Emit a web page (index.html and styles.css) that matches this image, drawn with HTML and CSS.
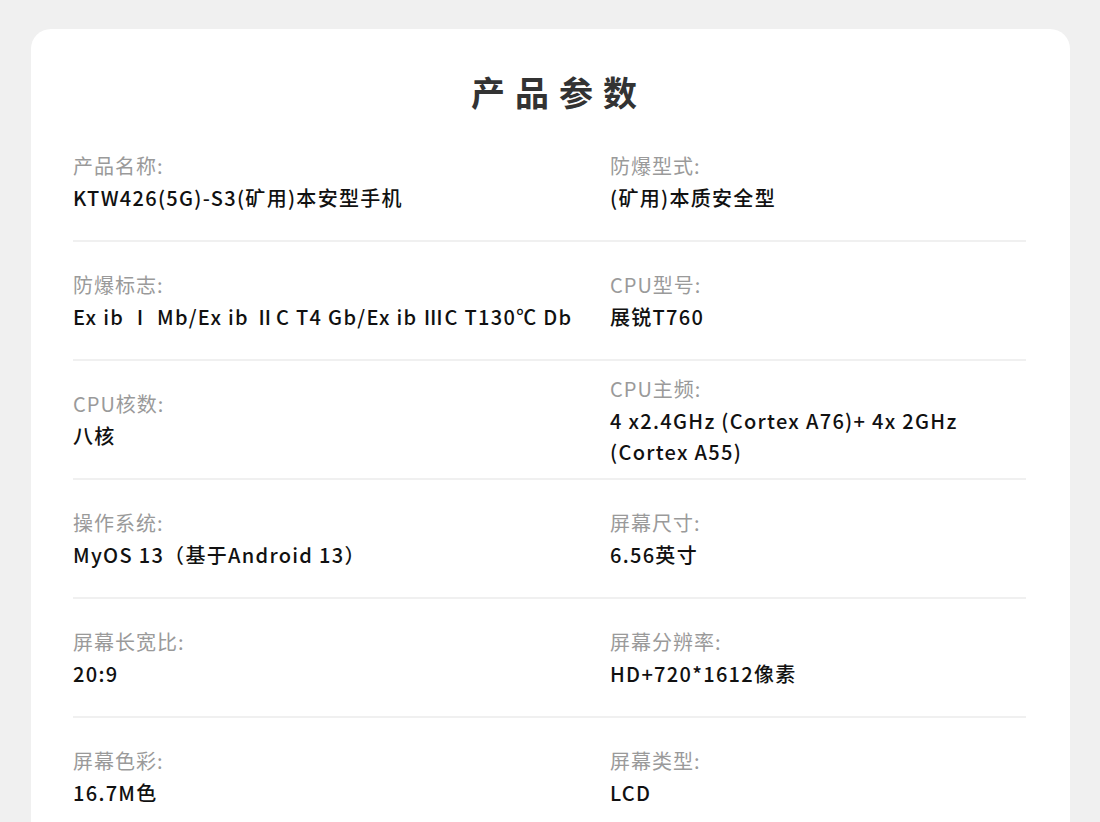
FILE: index.html
```html
<!DOCTYPE html>
<html lang="zh-CN">
<head>
<meta charset="utf-8">
<title>产品参数</title>
<link rel="stylesheet" href="styles.css">
</head>
<body>
<div class="page">
  <section class="card">
    <h1 class="title">产品参数</h1>
    <div class="specs">
      <div class="row">
        <div class="cell"><div class="label">产品名称:</div><div class="value">KTW426(5G)-S3(矿用)本安型手机</div></div>
        <div class="cell"><div class="label">防爆型式:</div><div class="value">(矿用)本质安全型</div></div>
      </div>
      <div class="row">
        <div class="cell"><div class="label">防爆标志:</div><div class="value">Ex ib Ⅰ Mb/Ex ib ⅡC T4 Gb/Ex ib ⅢC T130℃ Db</div></div>
        <div class="cell"><div class="label">CPU型号:</div><div class="value">展锐T760</div></div>
      </div>
      <div class="row">
        <div class="cell"><div class="label">CPU核数:</div><div class="value">八核</div></div>
        <div class="cell"><div class="label">CPU主频:</div><div class="value">4 x2.4GHz (Cortex A76)+ 4x 2GHz (Cortex A55)</div></div>
      </div>
      <div class="row">
        <div class="cell"><div class="label">操作系统:</div><div class="value">MyOS 13（基于Android 13）</div></div>
        <div class="cell"><div class="label">屏幕尺寸:</div><div class="value">6.56英寸</div></div>
      </div>
      <div class="row">
        <div class="cell"><div class="label">屏幕长宽比:</div><div class="value">20:9</div></div>
        <div class="cell"><div class="label">屏幕分辨率:</div><div class="value">HD+720*1612像素</div></div>
      </div>
      <div class="row">
        <div class="cell"><div class="label">屏幕色彩:</div><div class="value">16.7M色</div></div>
        <div class="cell"><div class="label">屏幕类型:</div><div class="value">LCD</div></div>
      </div>
    </div>
  </section>
</div>
</body>
</html>
```

FILE: styles.css
```css
* { box-sizing: border-box; }
html, body {
  margin: 0;
  padding: 0;
  background: #f0f0f0;
  font-family: "Noto Sans CJK SC", "Noto Sans", sans-serif;
}
.page {
  padding: 29px 30px 0 31px;
  height: 822px;
  overflow: hidden;
}
.card {
  background: #fff;
  border-radius: 20px;
  padding: 39px 44px 40px 42px;
  min-height: 900px;
}
.title {
  margin: 0 0 6px;
  text-align: center;
  font-size: 34px;
  line-height: 48px;
  font-weight: 700;
  color: #333;
  letter-spacing: 10px;
  padding-left: 19px;
}
.row {
  display: grid;
  grid-template-columns: 537px 1fr;
  align-items: center;
  height: 119px;
  border-bottom: 2px solid #f0f0f0;
}
.row:first-child { height: 120px; }
.cell {
  display: flex;
  flex-direction: column;
}
.label {
  font-size: 20px;
  line-height: 32px;
  color: #9a9a9a;
  letter-spacing: 1px;
}
.value {
  font-size: 20px;
  line-height: 31px;
  font-weight: 500;
  color: #111;
  letter-spacing: 1.3px;
}
```
